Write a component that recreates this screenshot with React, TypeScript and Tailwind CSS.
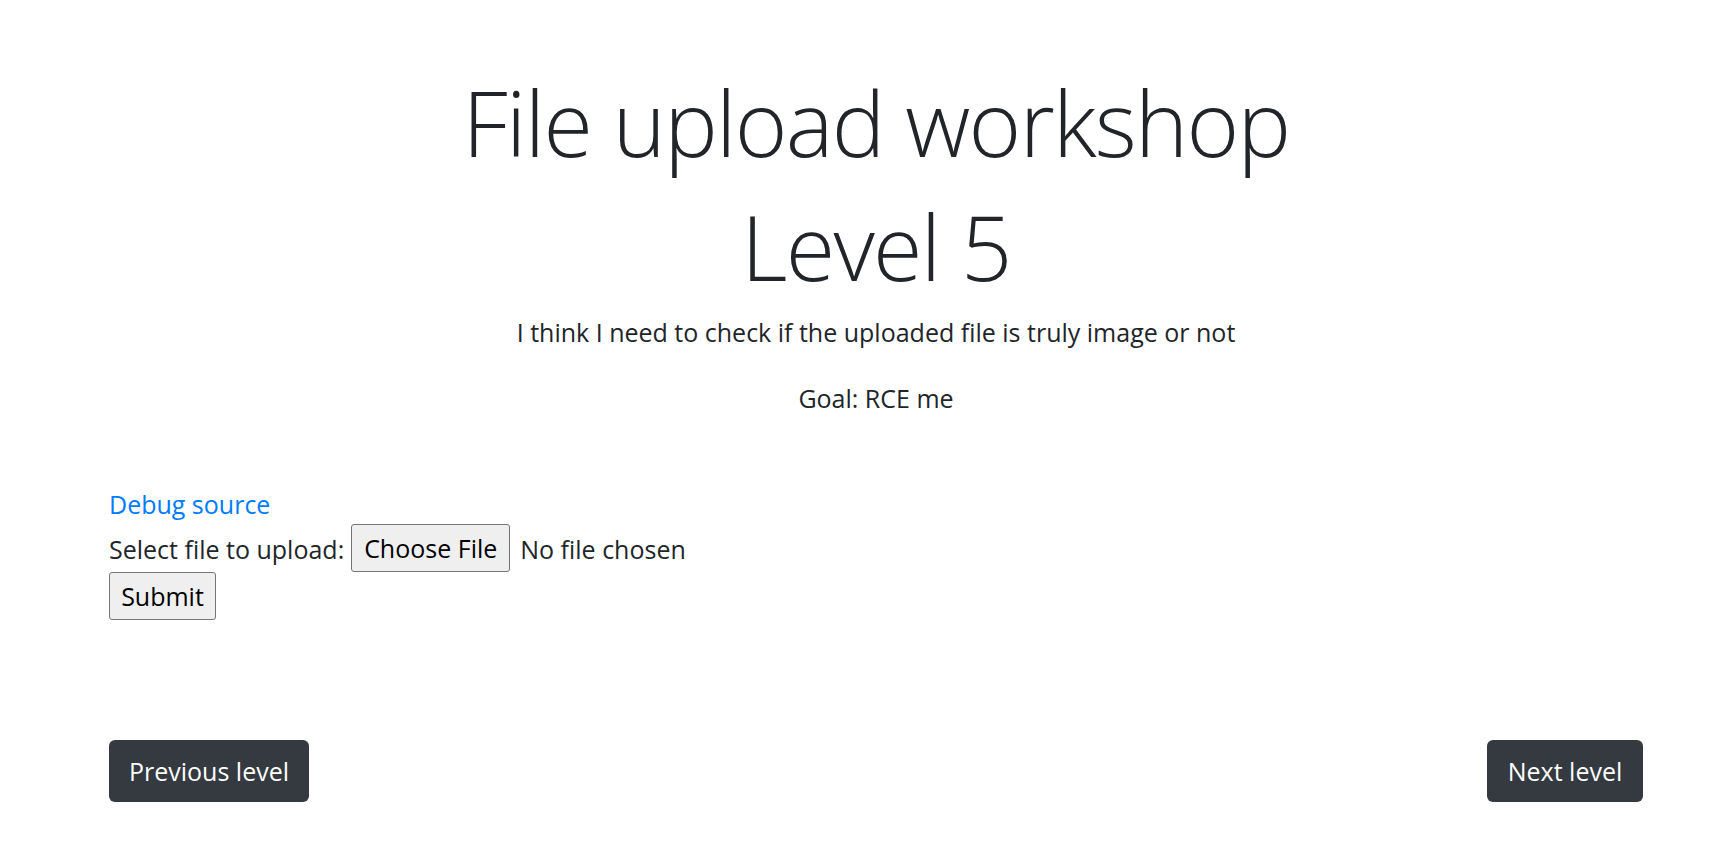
export default function App() {
  const body = "font-['Open_Sans','Noto_Sans',sans-serif]"
  return (
    <div className={`min-h-screen bg-white text-[#212529] ${body}`}>
      <div className="ml-[109px] w-[1534px] pt-[60px]">
        {/* Header */}
        <div className="text-center">
          <h1 className="text-[90px] font-light leading-[124px] tracking-[-0.019em]">File upload workshop</h1>
          <h1 className="text-[90px] font-light leading-[124px] tracking-[-0.019em]">Level 5</h1>
          <p className="mt-[6px] text-[25px] leading-[37.5px]">
            I think I need to check if the uploaded file is truly image or not
          </p>
          <p className="mt-[28px] text-[25px] leading-[37.5px]">Goal: RCE me</p>
        </div>

        {/* Upload form */}
        <div className="mt-[69px] text-[25px] leading-[37.5px]">
          <a href="#" className="text-[#007bff]">Debug source</a>
          <form onSubmit={(e) => e.preventDefault()}>
            <div className="flex items-center">
              <span className="pt-[4px]">Select file to upload:</span>
              <button
                type="button"
                className="ml-[7px] flex h-[48px] w-[159px] items-center justify-center rounded-[3px] border border-[#767676] bg-[#efefef] pt-[3px] text-black"
              >
                Choose File
              </button>
              <span className="ml-[10px] pt-[4px]">No file chosen</span>
            </div>
            <button
              type="submit"
              className="flex h-[48px] w-[107px] items-center justify-center rounded-[3px] border border-[#767676] bg-[#efefef] pt-[3px] text-black"
            >
              Submit
            </button>
          </form>
        </div>

        {/* Navigation */}
        <div className="mt-[120px] flex justify-between">
          <button className="h-[62px] w-[200px] rounded-[6px] bg-[#343a40] pt-[3px] text-[25px] text-white">
            Previous level
          </button>
          <button className="h-[62px] w-[156px] rounded-[6px] bg-[#343a40] pt-[3px] text-[25px] text-white">
            Next level
          </button>
        </div>
      </div>
    </div>
  )
}
